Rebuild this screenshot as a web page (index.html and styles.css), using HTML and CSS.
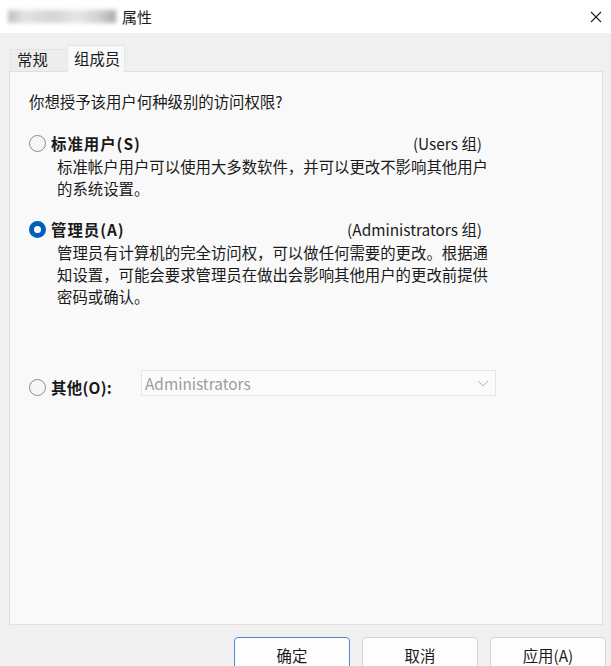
FILE: index.html
```html
<!DOCTYPE html>
<html lang="zh-CN">
<head>
    <meta charset="UTF-8">
    <title>属性</title>
    <link rel="stylesheet" href="styles.css">
</head>
<body>
<!-- BARRA DE TITULO -->
<div class="titlebar">
    <span class="blurname"></span>
    <span class="titulo">属性</span>
    <svg class="cerrar" width="12" height="12" viewBox="0 0 12 12">
        <path d="M1 1 L11 11 M11 1 L1 11" stroke="#1f1f1f" stroke-width="1.1" fill="none"/>
    </svg>
</div>

<!-- PESTAÑAS -->
<div class="tabs">
    <div class="tab">常规</div>
    <div class="tab activa">组成员</div>
</div>

<div class="panel">
    <p class="pregunta">你想授予该用户何种级别的访问权限?</p>

    <div class="opcion">
        <div class="cabecera">
            <span class="radio"></span>
            <span class="nombre">标准用户(S)</span>
            <span class="grupo">(Users 组)</span>
        </div>
        <p class="desc">标准帐户用户可以使用大多数软件，并可以更改不影响其他用户<br>的系统设置。</p>
    </div>

    <div class="opcion">
        <div class="cabecera">
            <span class="radio marcado"></span>
            <span class="nombre">管理员(A)</span>
            <span class="grupo">(Administrators 组)</span>
        </div>
        <p class="desc">管理员有计算机的完全访问权，可以做任何需要的更改。根据通<br>知设置，可能会要求管理员在做出会影响其他用户的更改前提供<br>密码或确认。</p>
    </div>

    <div class="otro">
        <span class="radio"></span>
        <span class="nombre ancho">其他(O):</span>
        <div class="combo">
            <span>Administrators</span>
            <svg width="12" height="7" viewBox="0 0 12 7">
                <path d="M1 1 L6 6 L11 1" stroke="#b4b4b4" stroke-width="1" fill="none"/>
            </svg>
        </div>
    </div>
</div>

<!-- BOTONES -->
<div class="botones">
    <div class="boton defecto">确定</div>
    <div class="boton">取消</div>
    <div class="boton">应用(A)</div>
</div>
</body>
</html>
```

FILE: styles.css
```css
* {
    box-sizing: border-box;
}

body {
    margin: 0;
    width: 611px;
    height: 666px;
    overflow: hidden;
    background-color: #f0f0f0;
    font-family: "Noto Sans CJK SC", "Noto Sans", sans-serif;
    font-size: 15.4px;
    color: #1a1a1a;
}

.titlebar {
    height: 33px;
    background-color: #ffffff;
    display: flex;
    align-items: center;
    padding-left: 8px;
    padding-right: 9px;
}

.blurname {
    width: 108px;
    height: 13px;
    background: linear-gradient(90deg, #bdbdbd 0%, #e2e2e2 15%, #d4d4d4 40%, #e6e6e6 65%, #cfcfcf 85%, #a9a9a9 100%);
    filter: blur(2px);
    margin-right: 6px;
}

.titulo {
    font-size: 15px;
    color: #1a1a1a;
}

.cerrar {
    margin-left: auto;
}

.tabs {
    display: flex;
    align-items: flex-end;
    margin-top: 12px;
    padding-left: 10px;
    height: 26px;
}

.tab {
    width: 57px;
    height: 22px;
    padding-left: 6px;
    line-height: 18px;
    background-color: #ededed;
    border: 1px solid #e3e3e3;
    border-bottom: none;
    border-right: none;
}

.tab.activa {
    width: 58px;
    height: 27px;
    margin-bottom: -1px;
    padding-left: 6px;
    line-height: 24px;
    background-color: #f9f9f9;
    border: 1px solid #e6e6e6;
    border-bottom: none;
    position: relative;
    z-index: 1;
}

.panel {
    margin: 0 8px 0 9px;
    height: 554px;
    background-color: #f9f9f9;
    border: 1px solid #e0e0e0;
    padding: 19px 20px 0 19px;
}

.pregunta {
    margin: 0;
    line-height: 21px;
}

.opcion {
    margin-top: 19px;
}

.opcion + .opcion {
    margin-top: 18px;
}

.cabecera {
    display: flex;
    align-items: center;
    height: 24px;
    width: 453px;
}

.radio {
    width: 17px;
    height: 17px;
    border-radius: 50%;
    border: 1px solid #8a8a8a;
    background-color: #f6f6f6;
    flex-shrink: 0;
}

.radio.marcado {
    border: 5.5px solid #005fb8;
    background-color: #ffffff;
}

.nombre {
    margin-left: 5px;
    font-weight: bold;
    letter-spacing: 1px;
}

.ancho {
    width: 90px;
    letter-spacing: 0.3px;
}

.grupo {
    margin-left: auto;
}

.desc {
    margin: 0 0 0 28px;
    line-height: 22px;
    white-space: nowrap;
}

.otro {
    display: flex;
    align-items: center;
    margin-top: 63px;
    height: 26px;
}

.otro .radio {
    margin-top: 8px;
}

.otro .nombre {
    margin-top: 8px;
}

.combo {
    width: 355px;
    height: 26px;
    display: flex;
    align-items: center;
    justify-content: space-between;
    padding: 0 6px 0 3px;
    background-color: #fbfbfb;
    border: 1px solid #e6e6e6;
    color: #9c9c9c;
}

.botones {
    display: flex;
    justify-content: flex-end;
    gap: 12px;
    padding-right: 5px;
    margin-top: 12px;
}

.boton {
    width: 116px;
    height: 32px;
    line-height: 34px;
    text-align: center;
    background-color: #fdfdfd;
    border: 1px solid #d6d6d6;
    border-radius: 4px;
}

.boton.defecto {
    border: 1px solid #4a8bd4;
}
```
